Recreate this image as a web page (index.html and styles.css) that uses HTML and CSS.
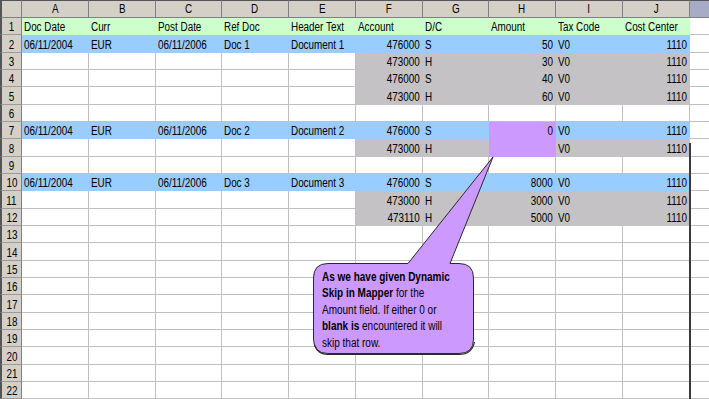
FILE: index.html
```html
<!DOCTYPE html>
<html>
<head>
<meta charset="utf-8">
<link rel="stylesheet" href="styles.css">
</head>
<body>
<div class="sheet">
<table class="grid">
<colgroup>
<col class="c-rh"><col class="c67"><col class="c67"><col class="c66"><col class="c67"><col class="c67"><col class="c67"><col class="c66"><col class="c67"><col class="c67"><col class="c67"><col class="c-last">
</colgroup>
<thead>
<tr class="hrow"><th class="corner"></th><th><span>A</span></th><th><span>B</span></th><th><span>C</span></th><th><span>D</span></th><th><span>E</span></th><th><span>F</span></th><th><span>G</span></th><th><span>H</span></th><th><span>I</span></th><th><span>J</span></th><th class="hk"></th></tr>
</thead>
<tbody>
<tr><th><span>1</span></th><td class="g"><span>Doc Date</span></td><td class="g"><span>Curr</span></td><td class="g"><span>Post Date</span></td><td class="g"><span>Ref Doc</span></td><td class="g"><span>Header Text</span></td><td class="g"><span>Account</span></td><td class="g"><span>D/C</span></td><td class="g"><span>Amount</span></td><td class="g"><span>Tax Code</span></td><td class="g"><span>Cost Center</span></td><td></td></tr>
<tr><th><span>2</span></th><td class="b"><span>06/11/2004</span></td><td class="b"><span>EUR</span></td><td class="b"><span>06/11/2006</span></td><td class="b"><span>Doc 1</span></td><td class="b"><span>Document 1</span></td><td class="b r"><span>476000</span></td><td class="b"><span>S</span></td><td class="b r"><span>50</span></td><td class="b"><span>V0</span></td><td class="b r"><span>1110</span></td><td></td></tr>
<tr><th><span>3</span></th><td></td><td></td><td></td><td></td><td></td><td class="s r"><span>473000</span></td><td class="s"><span>H</span></td><td class="s r"><span>30</span></td><td class="s"><span>V0</span></td><td class="s r"><span>1110</span></td><td></td></tr>
<tr><th><span>4</span></th><td></td><td></td><td></td><td></td><td></td><td class="s r"><span>476000</span></td><td class="s"><span>S</span></td><td class="s r"><span>40</span></td><td class="s"><span>V0</span></td><td class="s r"><span>1110</span></td><td></td></tr>
<tr><th><span>5</span></th><td></td><td></td><td></td><td></td><td></td><td class="s r"><span>473000</span></td><td class="s"><span>H</span></td><td class="s r"><span>60</span></td><td class="s"><span>V0</span></td><td class="s r"><span>1110</span></td><td></td></tr>
<tr><th><span>6</span></th><td></td><td></td><td></td><td></td><td></td><td></td><td></td><td></td><td></td><td></td><td></td></tr>
<tr><th><span>7</span></th><td class="b"><span>06/11/2004</span></td><td class="b"><span>EUR</span></td><td class="b"><span>06/11/2006</span></td><td class="b"><span>Doc 2</span></td><td class="b"><span>Document 2</span></td><td class="b r"><span>476000</span></td><td class="b"><span>S</span></td><td class="p r"><span>0</span></td><td class="b"><span>V0</span></td><td class="b r"><span>1110</span></td><td></td></tr>
<tr><th><span>8</span></th><td></td><td></td><td></td><td></td><td></td><td class="s r"><span>473000</span></td><td class="s"><span>H</span></td><td class="p"></td><td class="s"><span>V0</span></td><td class="s r"><span>1110</span></td><td></td></tr>
<tr><th><span>9</span></th><td></td><td></td><td></td><td></td><td></td><td></td><td></td><td></td><td></td><td></td><td></td></tr>
<tr><th><span>10</span></th><td class="b"><span>06/11/2004</span></td><td class="b"><span>EUR</span></td><td class="b"><span>06/11/2006</span></td><td class="b"><span>Doc 3</span></td><td class="b"><span>Document 3</span></td><td class="b r"><span>476000</span></td><td class="b"><span>S</span></td><td class="b r"><span>8000</span></td><td class="b"><span>V0</span></td><td class="b r"><span>1110</span></td><td></td></tr>
<tr><th><span>11</span></th><td></td><td></td><td></td><td></td><td></td><td class="s r"><span>473000</span></td><td class="s"><span>H</span></td><td class="s r"><span>3000</span></td><td class="s"><span>V0</span></td><td class="s r"><span>1110</span></td><td></td></tr>
<tr><th><span>12</span></th><td></td><td></td><td></td><td></td><td></td><td class="s r"><span>473110</span></td><td class="s"><span>H</span></td><td class="s r"><span>5000</span></td><td class="s"><span>V0</span></td><td class="s r"><span>1110</span></td><td></td></tr>
<tr><th><span>13</span></th><td></td><td></td><td></td><td></td><td></td><td></td><td></td><td></td><td></td><td></td><td></td></tr>
<tr><th><span>14</span></th><td></td><td></td><td></td><td></td><td></td><td></td><td></td><td></td><td></td><td></td><td></td></tr>
<tr><th><span>15</span></th><td></td><td></td><td></td><td></td><td></td><td></td><td></td><td></td><td></td><td></td><td></td></tr>
<tr><th><span>16</span></th><td></td><td></td><td></td><td></td><td></td><td></td><td></td><td></td><td></td><td></td><td></td></tr>
<tr><th><span>17</span></th><td></td><td></td><td></td><td></td><td></td><td></td><td></td><td></td><td></td><td></td><td></td></tr>
<tr><th><span>18</span></th><td></td><td></td><td></td><td></td><td></td><td></td><td></td><td></td><td></td><td></td><td></td></tr>
<tr><th><span>19</span></th><td></td><td></td><td></td><td></td><td></td><td></td><td></td><td></td><td></td><td></td><td></td></tr>
<tr><th><span>20</span></th><td></td><td></td><td></td><td></td><td></td><td></td><td></td><td></td><td></td><td></td><td></td></tr>
<tr><th><span>21</span></th><td></td><td></td><td></td><td></td><td></td><td></td><td></td><td></td><td></td><td></td><td></td></tr>
<tr><th><span>22</span></th><td></td><td></td><td></td><td></td><td></td><td></td><td></td><td></td><td></td><td></td><td></td></tr>
</tbody>
</table>

<div class="pagebreak"></div>

<svg class="callout-shape" width="709" height="399" viewBox="0 0 709 399">
  <path d="M328 263.5 L408 263.5 L493 157 L450 263.5 L459 263.5 Q473.5 263.5 473.5 278 L473.5 339 Q473.5 353.5 459 353.5 L328 353.5 Q313.5 353.5 313.5 339 L313.5 278 Q313.5 263.5 328 263.5 Z" fill="#cc99ff" stroke="#2a2a2a" stroke-width="1"/>
  <path d="M314.5 345 Q318 354.5 328 354.5 L459 354.5 Q472 354.5 474.5 342" fill="none" stroke="#2a2a2a" stroke-width="1.2"/>
</svg>
<div class="callout-text">
  <div><b>As we have given Dynamic</b></div>
  <div><b>Skip in Mapper</b> for the</div>
  <div>Amount field. If either 0 or</div>
  <div><b>blank is</b> encountered it will</div>
  <div>skip that row.</div>
</div>
</div>
</body>
</html>
```

FILE: styles.css
```css
html, body {
  margin: 0;
  padding: 0;
  background: #ffffff;
  overflow: hidden;
}
.sheet {
  position: relative;
  width: 709px;
  height: 399px;
  overflow: hidden;
  font-family: "Liberation Sans", Arial, sans-serif;
  font-size: 12.5px;
  color: #000;
}
.grid {
  border-collapse: separate;
  border-spacing: 0;
  table-layout: fixed;
  width: 730px;
}
.c-rh { width: 22px; }
.c67 { width: 67px; }
.c66 { width: 66px; }
.c-last { width: 40px; }

.grid tr { height: 17.333px; }
.grid tr.hrow { height: 18px; }

.grid td, .grid th {
  box-sizing: border-box;
  padding: 0 2px 0 2px;
  line-height: 14px;
  vertical-align: bottom;
  white-space: nowrap;
  overflow: hidden;
  font-weight: normal;
  text-align: left;
}
.grid td span, .grid th span {
  display: inline-block;
  transform: scaleX(0.79);
  transform-origin: left bottom;
}
.grid td.r span { transform-origin: right bottom; }
.grid th span { transform-origin: center bottom; }

.grid td {
  border-right: 1px solid #c0c0c0;
  border-bottom: 1px solid #c0c0c0;
}
.grid th {
  background: #d4d0c8;
  border-right: 1px solid #808080;
  border-bottom: 1px solid #9a9a9a;
  text-align: center;
  padding: 0;
}
.grid tbody th {
  border-left: 2px solid #555555;
}
.grid thead th {
  border-top: 1px solid #555555;
  border-bottom: 1px solid #808080;
  vertical-align: middle;
}
.grid thead th.corner {
  border-left: 2px solid #555555;
}
.grid thead th.hk {
  background: #a7abc6;
}
.grid td.r { text-align: right; }
.grid td.g { background: #ccffcc; border-color: #ccffcc; }
.grid td.b { background: #99ccff; border-color: #99ccff; }
.grid td.s { background: #c4c2c4; border-color: #c4c2c4; }
.grid td.p { background: #cc99ff; border-color: #cc99ff; }

.pagebreak {
  position: absolute;
  left: 689px;
  top: 143px;
  width: 2px;
  height: 260px;
  background: #3a3a3a;
}
.callout-shape {
  position: absolute;
  left: 0;
  top: 0;
}
.callout-text {
  position: absolute;
  left: 322px;
  top: 269px;
  line-height: 16.4px;
  font-size: 12.5px;
  white-space: nowrap;
  transform: scaleX(0.8);
  transform-origin: left top;
}
.callout-text b { font-weight: bold; }
```
